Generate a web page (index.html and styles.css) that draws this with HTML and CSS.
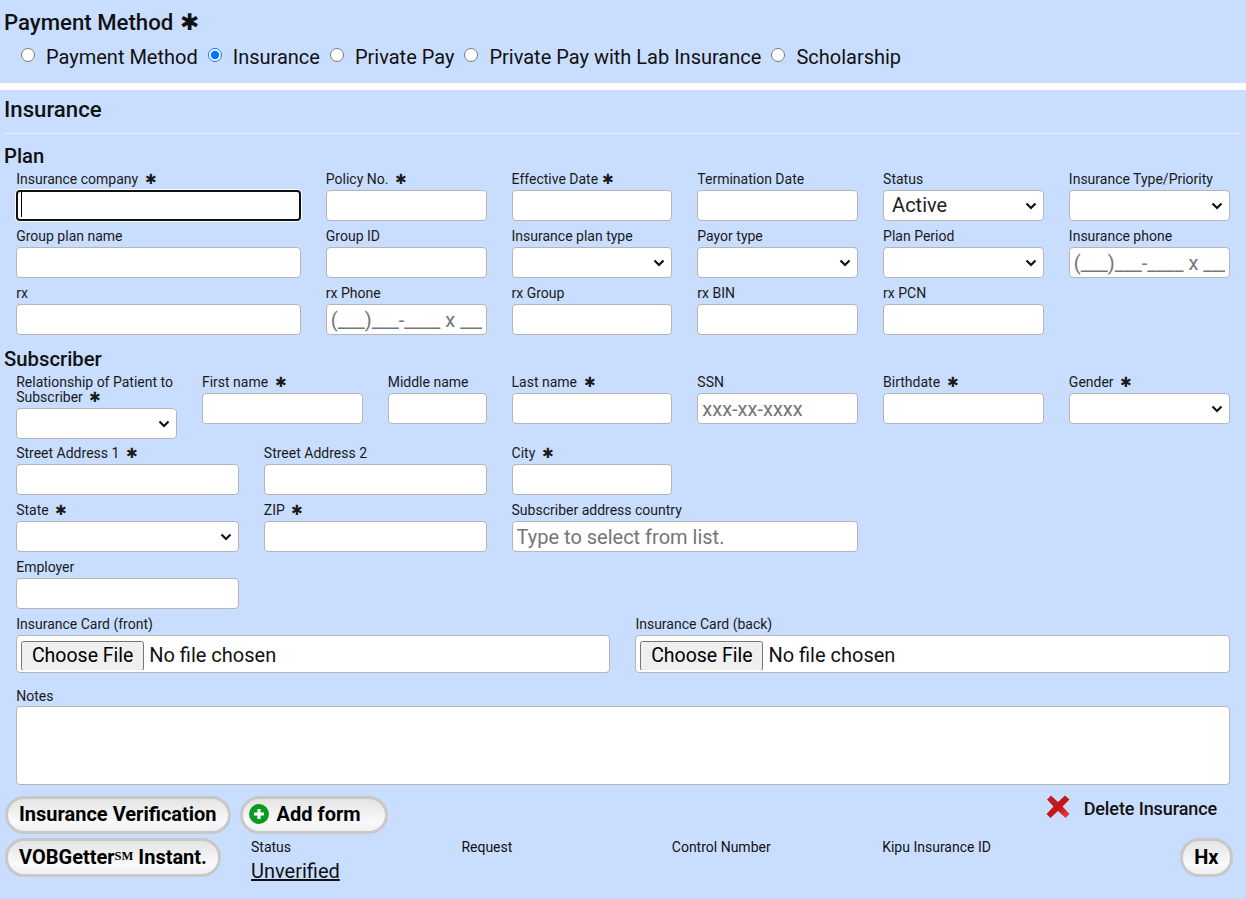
FILE: index.html
```html
<!DOCTYPE html>
<html lang="en">
<head>
<meta charset="utf-8">
<title>Insurance</title>
<link rel="stylesheet" href="styles.css">
</head>
<body>
<section class="pay">
  <h2 class="pay-title">Payment Method <span class="req-lg">✱</span></h2>
  <div class="radios">
    <label class="radio"><input type="radio" name="pm">Payment Method</label>
    <label class="radio"><input type="radio" name="pm" checked>Insurance</label>
    <label class="radio"><input type="radio" name="pm">Private Pay</label>
    <label class="radio"><input type="radio" name="pm">Private Pay with Lab Insurance</label>
    <label class="radio"><input type="radio" name="pm">Scholarship</label>
  </div>
</section>
<main class="ins">
  <h2 class="ins-title">Insurance</h2>
  <h3 class="sub plan">Plan</h3>
  <div class="grid">
    <div class="f s5"><label>Insurance company <i>✱</i></label><div class="caretwrap"><input type="text" autofocus><span class="caret"></span></div></div>
    <div class="f s3"><label>Policy No. <i>✱</i></label><input type="text"></div>
    <div class="f s3"><label>Effective Date <i class="tight">✱</i></label><input type="text"></div>
    <div class="f s3"><label>Termination Date</label><input type="text"></div>
    <div class="f s3"><label>Status</label><select><option>Active</option></select></div>
    <div class="f s3"><label>Insurance Type/Priority</label><select><option></option></select></div>

    <div class="f s5"><label>Group plan name</label><input type="text"></div>
    <div class="f s3"><label>Group ID</label><input type="text"></div>
    <div class="f s3"><label>Insurance plan type</label><select><option></option></select></div>
    <div class="f s3"><label>Payor type</label><select><option></option></select></div>
    <div class="f s3"><label>Plan Period</label><select><option></option></select></div>
    <div class="f s3"><label>Insurance phone</label><input type="text" placeholder="(___)___-____ x ___"></div>

    <div class="f s5"><label>rx</label><input type="text"></div>
    <div class="f s3"><label>rx Phone</label><input type="text" placeholder="(___)___-____ x ___"></div>
    <div class="f s3"><label>rx Group</label><input type="text"></div>
    <div class="f s3"><label>rx BIN</label><input type="text"></div>
    <div class="f s3"><label>rx PCN</label><input type="text"></div>
  </div>
  <h3 class="sub subscriber">Subscriber</h3>
  <div class="grid">
    <div class="f s3 tall"><label>Relationship of Patient to Subscriber <i>✱</i></label><select><option></option></select></div>
    <div class="f s3"><label>First name <i>✱</i></label><input type="text"></div>
    <div class="f s2"><label>Middle name</label><input type="text"></div>
    <div class="f s3"><label>Last name <i>✱</i></label><input type="text"></div>
    <div class="f s3"><label>SSN</label><input type="text" placeholder="xxx-xx-xxxx"></div>
    <div class="f s3"><label>Birthdate <i>✱</i></label><input type="text"></div>
    <div class="f s3"><label>Gender <i>✱</i></label><select><option></option></select></div>

    <div class="f s4 newrow"><label>Street Address 1 <i>✱</i></label><input type="text"></div>
    <div class="f s4"><label>Street Address 2</label><input type="text"></div>
    <div class="f s3"><label>City <i>✱</i></label><input type="text"></div>

    <div class="f s4 newrow"><label>State <i>✱</i></label><select><option></option></select></div>
    <div class="f s4"><label>ZIP <i>✱</i></label><input type="text"></div>
    <div class="f s6"><label>Subscriber address country</label><input type="text" placeholder="Type to select from list."></div>

    <div class="f s4 newrow"><label>Employer</label><input type="text"></div>

    <div class="f s10 file newrow"><label>Insurance Card (front)</label><div class="filebox"><input type="file"></div></div>
    <div class="f s10 file"><label>Insurance Card (back)</label><div class="filebox"><input type="file"></div></div>

    <div class="f s20 notes"><label>Notes</label><textarea></textarea></div>
  </div>
  <div class="actions">
    <div class="actions-left">
      <button class="pill" type="button">Insurance Verification</button>
      <button class="pill add" type="button">
        <svg class="plus" viewBox="0 0 20 20" width="20" height="20" aria-hidden="true"><circle cx="10" cy="10" r="10" fill="#0a9a1e"/><path d="M10 5v10M5 10h10" stroke="#fff" stroke-width="3.200" fill="none"/></svg>
        Add form
      </button>
    </div>
    <a class="delete">
      <svg class="x" viewBox="0 0 24 24" width="24" height="25" aria-hidden="true">
        <defs><linearGradient id="xg" x1="0" y1="0" x2="1" y2="1"><stop offset="0" stop-color="#b02a2a"/><stop offset="0.55" stop-color="#c81414"/><stop offset="1" stop-color="#ee4450"/></linearGradient></defs>
        <path d="M1 5 5 1 12 7.500 19 1 23.500 5 16.500 12 23.500 19.500 19.500 23.500 12 16.500 4.500 23.500 .5 19.500 7.500 12Z" fill="url(#xg)"/>
      </svg>
      <span class="delete-text">Delete Insurance</span>
    </a>
  </div>
  <div class="verify">
    <button class="pill vob" type="button">VOBGetter<span class="sm">SM</span>&nbsp;Instant.</button>
    <div class="vgrid">
      <div class="vcell"><span class="vl">Status</span><a class="vlink">Unverified</a></div>
      <div class="vcell"><span class="vl">Request</span></div>
      <div class="vcell"><span class="vl">Control Number</span></div>
      <div class="vcell"><span class="vl">Kipu Insurance ID</span></div>
    </div>
    <button class="pill hx" type="button">Hx</button>
  </div>
</main>
</body>
</html>
```
FILE: styles.css
```css
* { box-sizing: border-box; }
html, body { margin: 0; padding: 0; }
body {
  background: #fff;
  font-family: Roboto, "Liberation Sans", sans-serif;
  color: #111;
  height: 899px;
  overflow: hidden;
}
.pay {
  background: #c9deff;
  height: 83px;
  padding: 9px 4px 0;
}
.pay-title {
  margin: 0;
  font-size: 22.200px;
  font-weight: 500;
  line-height: 26px;
}
.req-lg { font-size: 23px; margin-left: 1px; line-height: 0; }
.radios {
  display: flex;
  align-items: center;
  gap: 10px;
  margin-top: 9px;
  padding-left: 17px;
}
.radio {
  display: flex;
  align-items: center;
  font-size: 20px;
  line-height: 26px;
}
.radio input {
  margin: 0 11px 4px 0;
  width: 14px;
  height: 14px;
}
.ins {
  margin-top: 7px;
  background: #c9deff;
  height: 809px;
  padding-top: 6px;
}
.ins-title {
  margin: 0 4px;
  font-size: 22.200px;
  font-weight: 500;
  line-height: 26px;
  padding-bottom: 11px;
  border-bottom: 1px solid #e8f0ff;
}
.sub {
  margin: 0 0 0 4px;
  font-size: 20.300px;
  font-weight: 500;
  line-height: 22px;
  padding-bottom: 5px;
}
.plan { margin-top: 11px; }
.subscriber { margin-top: 5px; }
.grid {
  display: grid;
  grid-template-columns: repeat(20, 1fr);
  column-gap: 25px;
  padding: 0 16.400px 0 16.200px;
  align-items: start;
}
.f { margin-bottom: 8px; min-width: 0; }
.f.tall { margin-bottom: 7px; }
.f label {
  display: block;
  font-size: 14px;
  line-height: 15px;
  margin-bottom: 3px;
  color: #1a1a1a;
}
.f i {
  font-style: normal;
  font-size: 14px;
  line-height: 0;
  margin-left: 3px;
}
.f i.tight { margin-left: 0; }
.s2 { grid-column-end: span 2; }
.s3 { grid-column-end: span 3; }
.s4 { grid-column-end: span 4; }
.s5 { grid-column-end: span 5; }
.s6 { grid-column-end: span 6; }
.s10 { grid-column-end: span 10; }
.s20 { grid-column-end: span 20; }
.newrow { grid-column-start: 1; }
input[type="text"], select, textarea {
  display: block;
  width: 100%;
  height: 31px;
  font-family: inherit;
  font-size: 20px;
  background: #fff;
  border: 1px solid #b5b5b5;
  border-radius: 4px;
  padding: 0 4px;
  color: #222;
}
select {
  appearance: none;
  padding: 0 0 2px 8px;
  background-image: url("data:image/svg+xml,%3Csvg xmlns='http://www.w3.org/2000/svg' width='12' height='8' viewBox='0 0 12 8'%3E%3Cpath d='M1.500 1.500 6 6 10.500 1.500' fill='none' stroke='%23111' stroke-width='2.200'/%3E%3C/svg%3E");
  background-repeat: no-repeat;
  background-position: right 6px center;
}
input::placeholder { color: #757575; opacity: 1; }
.caretwrap { position: relative; }
.caret {
  position: absolute;
  left: 5px;
  top: 2px;
  width: 1px;
  height: 25px;
  background: #000;
}
input[type="text"]:focus {
  outline: none;
  border: 2.500px solid #111;
  box-shadow: 0 0 0 1px #fff;
  caret-color: transparent;
}
.filebox {
  height: 38px;
  background: #fff;
  border: 1px solid #b5b5b5;
  border-radius: 4px;
  padding: 4px;
}
.filebox input {
  display: block;
  font-family: inherit;
  font-size: 20px;
  line-height: 30px;
  width: 100%;
  height: 30px;
}
.filebox input::file-selector-button {
  font-family: inherit;
  font-size: 19.500px;
  width: 123px;
  height: 30px;
  margin-right: 5px;
  padding: 0;
}
.file { margin-bottom: 16px; }
.notes { margin-bottom: 0; }
.notes label { margin-bottom: 2px; }
.notes textarea { height: 79px; resize: none; }
.actions {
  display: flex;
  justify-content: space-between;
  align-items: flex-start;
  padding: 11px 29px 0 5px;
}
.actions-left { display: flex; gap: 9px; }
.pill {
  display: inline-flex;
  align-items: center;
  height: 38px;
  padding: 0 11px 2px;
  font-family: inherit;
  font-size: 20px;
  font-weight: 700;
  color: #000;
  border: 3px solid #c8c8c8;
  border-radius: 19px;
  background: linear-gradient(#e4e4e4, #f9f9f9 70%, #efefef);
}
.add { padding: 0 24px 2px 6px; }
.plus { margin-right: 8px; }
.delete {
  display: flex;
  align-items: center;
  gap: 14px;
  font-size: 18px;
  font-weight: 500;
  margin-top: -2px;
}
.delete-text { padding-top: 3px; letter-spacing: -0.1px; }
.verify {
  display: flex;
  align-items: flex-start;
  padding: 4px 13px 0 5px;
}
.verify .pill { height: 39px; }
.vob { width: 216px; white-space: nowrap; }
.vgrid {
  flex: 1;
  display: grid;
  grid-template-columns: repeat(4, 210.400px);
  margin-left: 30px;
}
.vcell { display: flex; flex-direction: column; }
.vl { font-size: 14px; line-height: 18px; }
.vlink {
  font-size: 20px;
  line-height: 26px;
  margin-top: 2px;
  text-decoration: underline;
}
.hx { padding: 0 11.500px 2px; }
.sm {
  font-family: "Liberation Serif", serif;
  font-size: 12.500px;
  line-height: 0;
  font-weight: 700;
  position: relative;
  top: -1px;
}
```
